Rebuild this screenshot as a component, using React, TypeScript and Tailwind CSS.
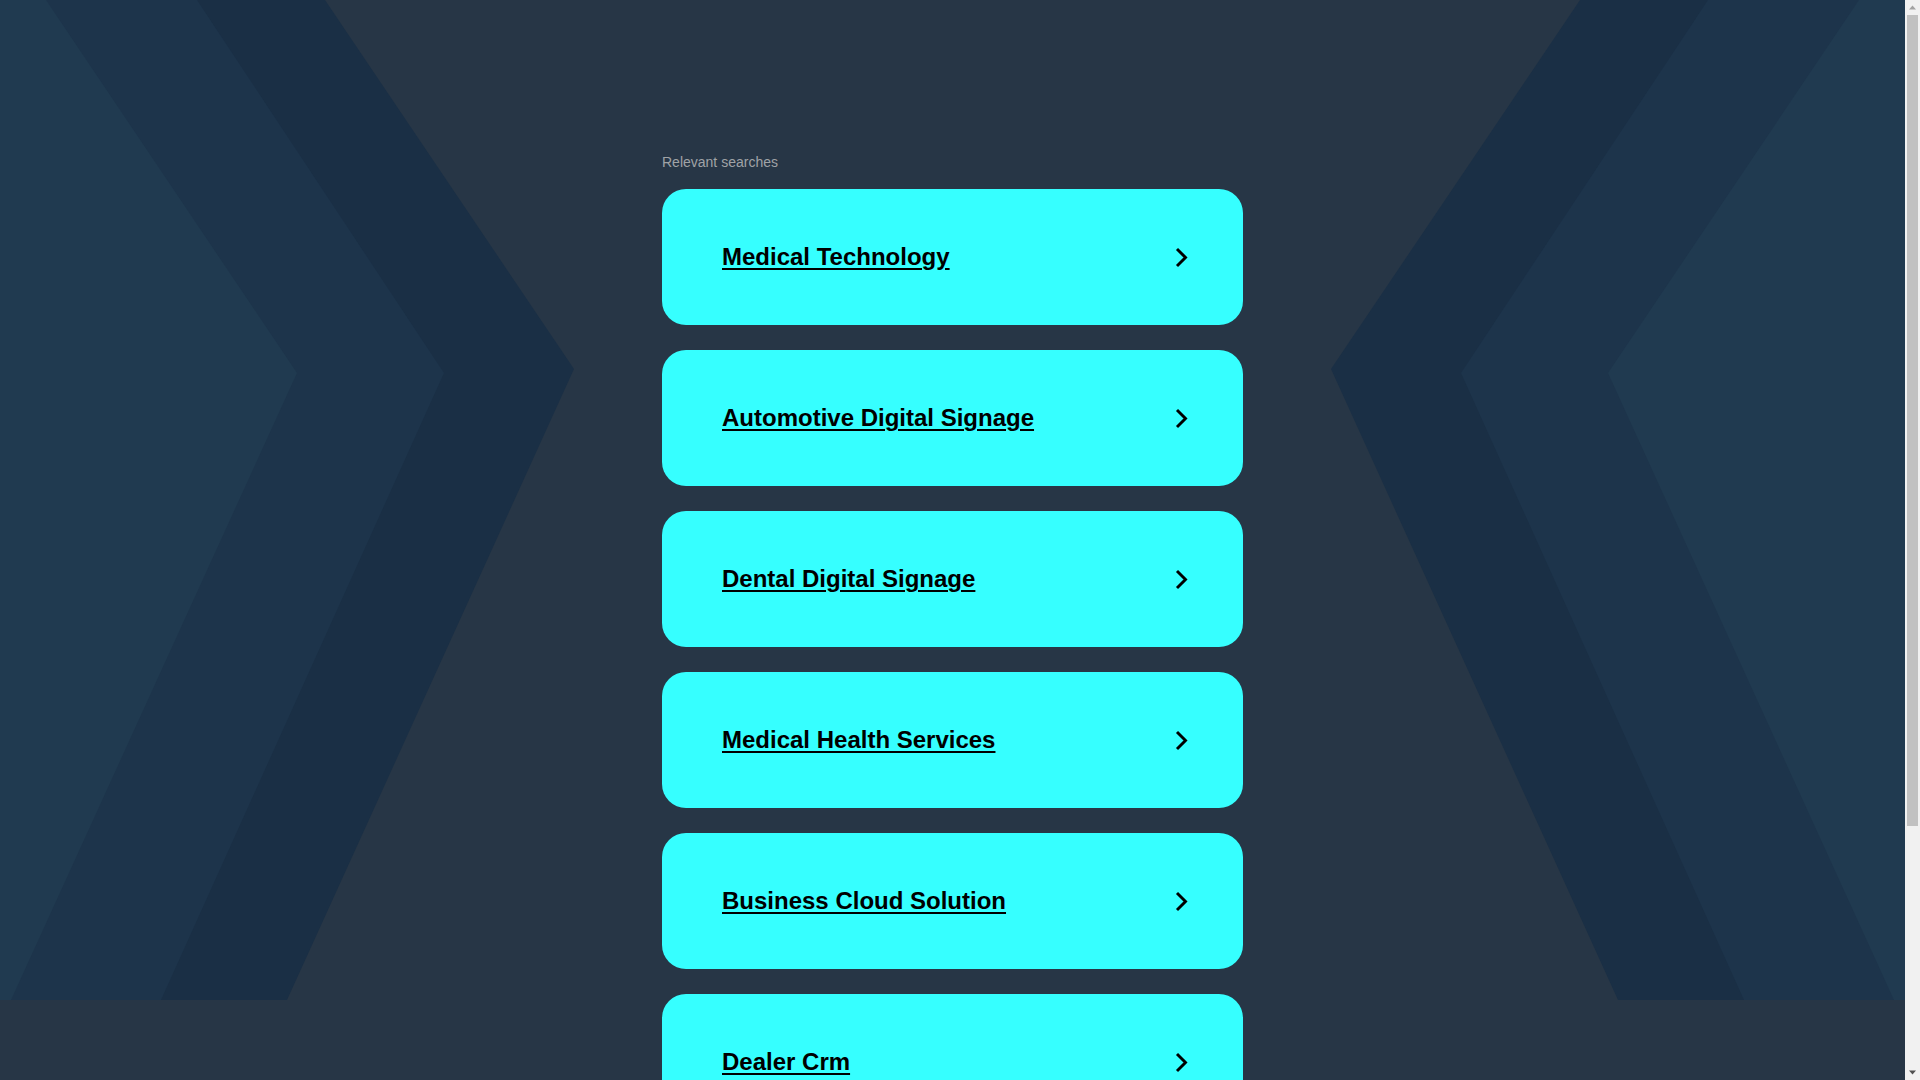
import React from "react";

const items = [
  "Medical Technology",
  "Automotive Digital Signage",
  "Dental Digital Signage",
  "Medical Health Services",
  "Business Cloud Solution",
  "Dealer Crm",
];

function Chevron() {
  return (
    <svg width="13" height="21" viewBox="0 0 13 21" fill="none" aria-hidden="true">
      <polyline points="2,2 10.5,10.5 2,19" stroke="#000" strokeWidth="2.9" strokeLinecap="butt" strokeLinejoin="miter" />
    </svg>
  );
}

function Background() {
  return (
    <svg
      className="absolute left-0 top-0 w-full h-[1000px] pointer-events-none"
      viewBox="0 0 1905 1000"
      preserveAspectRatio="none"
      aria-hidden="true"
    >
      <polygon points="0,0 325,0 574,369 287,1000 0,1000" fill="#1a2f45" />
      <polygon points="0,0 197,0 444,373 161,1000 0,1000" fill="#1d344b" />
      <polygon points="0,0 46,0 297,373 11,1000 0,1000" fill="#203a50" />
      <polygon points="1905,0 1580,0 1331,369 1618,1000 1905,1000" fill="#1a2f45" />
      <polygon points="1905,0 1708,0 1461,373 1744,1000 1905,1000" fill="#1d344b" />
      <polygon points="1905,0 1859,0 1608,373 1894,1000 1905,1000" fill="#203a50" />
    </svg>
  );
}

function Scrollbar() {
  return (
    <div className="sticky top-0 flex h-screen w-[15px] shrink-0 flex-col items-center bg-[#f1f1f1]">
      <svg width="15" height="15" viewBox="0 0 15 15" aria-hidden="true">
        <polygon points="4,9.5 11,9.5 7.5,5.5" fill="#a3a3a3" />
      </svg>
      <div className="flex flex-1 w-full flex-col px-[2px]">
        <div className="h-[811px] w-full bg-[#c1c1c1]" />
      </div>
      <svg width="15" height="15" viewBox="0 0 15 15" aria-hidden="true">
        <polygon points="4,5.5 11,5.5 7.5,9.5" fill="#505050" />
      </svg>
    </div>
  );
}

export default function App() {
  return (
    <div
      className="flex items-start bg-[#273646]"
      style={{ fontFamily: '"Liberation Sans", Arial, sans-serif' }}
    >
      <div className="relative min-h-screen flex-1">
        <Background />
        <div className="relative flex flex-col items-center pt-[154px] pb-[270px]">
          <div className="w-[581px]">
            <p className="text-[14px] leading-[16px] text-[#a0a3a6]">Relevant searches</p>
            <div className="mt-[19px] flex flex-col gap-[25px]">
              {items.map((t) => (
                <a
                  key={t}
                  href="#"
                  className="flex h-[136px] items-center justify-between rounded-[24px] bg-[#36ffff] pl-[60px] pr-[55px] text-black"
                >
                  <span className="text-[24px] font-bold underline decoration-2 underline-offset-[3px]">{t}</span>
                  <Chevron />
                </a>
              ))}
            </div>
          </div>
        </div>
      </div>
      <Scrollbar />
    </div>
  );
}
